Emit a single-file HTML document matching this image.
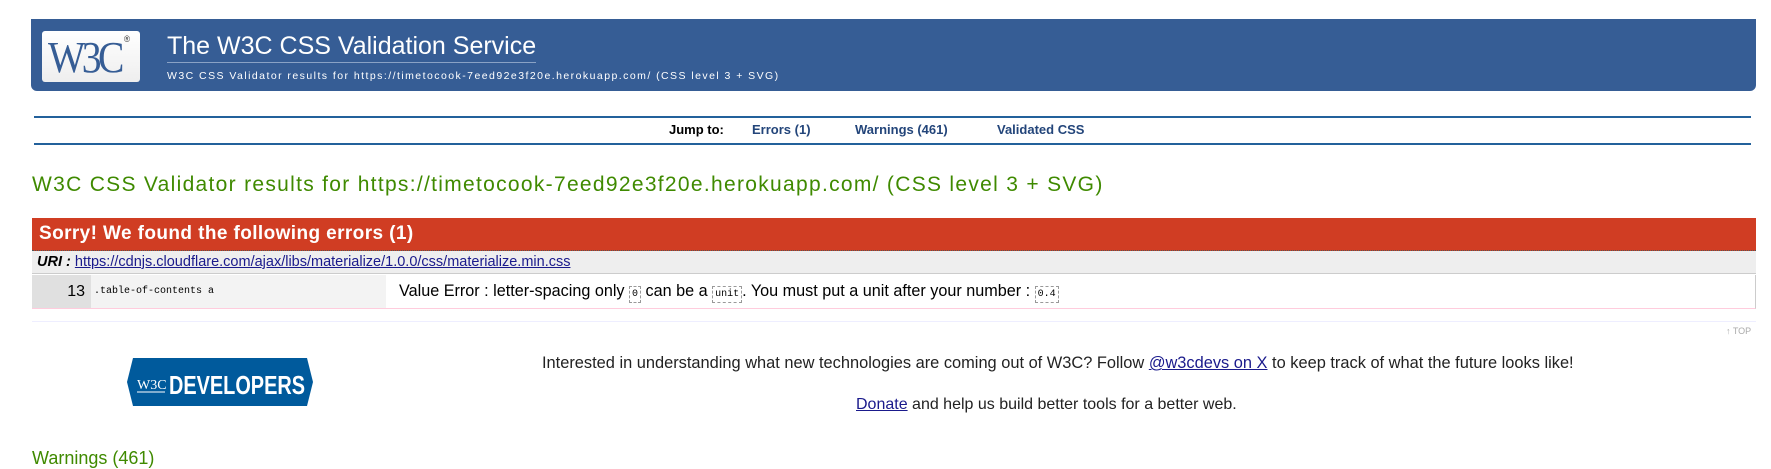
<!DOCTYPE html>
<html><head><meta charset="utf-8"><style>
body{margin:0;width:1771px;height:464px;overflow:hidden;background:#fff;font-family:"Liberation Sans",Arial,sans-serif;position:relative}
.a{position:absolute}
#hd{left:31px;top:19px;width:1725px;height:72px;background:#365d95;border-radius:0 0 6px 6px}
#logo{left:42px;top:31px;width:98px;height:51px;background:linear-gradient(#fff,#eee);border-radius:3px}
#logo span{position:absolute;left:6px;top:1px;font-family:"Liberation Serif",serif;font-size:44px;color:#365d95;letter-spacing:-4px;transform:scaleX(.9);transform-origin:left}
#t1{left:167px;top:33px;font-size:25px;color:#fff;border-bottom:1px solid #8aa2c5;padding-bottom:2px;line-height:27px}
#t2{left:167px;top:70px;font-size:10.5px;color:#fff;letter-spacing:1.45px}
.ln{height:2px;background:#23619b;left:34px;width:1717px}
#nav{top:122px;font-size:13px;font-weight:bold;color:#000}
#nav span{position:absolute;white-space:nowrap}
.lk{color:#23457a}
#h2{left:32px;top:173px;font-size:21px;color:#3f8a00;letter-spacing:1.3px}
#red{left:32px;top:218px;width:1724px;height:32px;background:#d03d23;color:#fff;font-weight:bold;font-size:19px;letter-spacing:.4px;line-height:32px;text-indent:7px;border-bottom:1px dotted #555}
#uri{left:32px;top:251px;width:1724px;height:22px;background:#eee;font-size:14.5px;line-height:22px;border-bottom:1px solid #ccc}
#row{left:32px;top:275px;width:1723px;height:33px;border-right:1px solid #ccc;border-bottom:1px solid #fcd;font-size:15px;line-height:33px}
code{font-family:"Liberation Mono",monospace;font-size:10px;border:1px dashed #999;padding:2px 2px}
.p{font-size:16px;color:#222}
</style></head><body>
<div id="hd" class="a"></div>
<div id="logo" class="a"><span>W3C</span><span style="left:82px;top:3px;font-size:9px;color:#333;font-family:'Liberation Sans'">®</span></div>
<div id="t1" class="a">The W3C CSS Validation Service</div>
<div id="t2" class="a">W3C CSS Validator results for https://timetocook-7eed92e3f20e.herokuapp.com/ (CSS level 3 + SVG)</div>
<div class="a ln" style="top:116px"></div>
<div class="a ln" style="top:143px"></div>
<div id="nav" class="a" style="left:-3px;width:1771px">
<span style="left:672px">Jump to:</span><span class="lk" style="left:755px">Errors (1)</span><span class="lk" style="left:858px">Warnings (461)</span><span class="lk" style="left:1000px">Validated CSS</span></div>
<div id="h2" class="a">W3C CSS Validator results for https://timetocook-7eed92e3f20e.herokuapp.com/ (CSS level 3 + SVG)</div>
<div id="red" class="a">Sorry! We found the following errors (1)</div>
<div id="uri" class="a"><b style="margin-left:5px"><i>URI :</i></b> <a style="color:#1a1a8c" href="#">https://cdnjs.cloudflare.com/ajax/libs/materialize/1.0.0/css/materialize.min.css</a></div>
<div id="row" class="a">
<div class="a" style="left:0;top:0;width:59px;height:33px;background:#e0e0e0;text-align:right;font-size:16px"><span style="margin-right:6px">13</span></div>
<div class="a" style="left:59px;top:0;width:295px;height:33px;background:#f3f3f3;font-family:'Liberation Mono',monospace;font-size:10px;text-indent:3px">.table-of-contents a</div>
<div class="a" style="left:367px;top:0;white-space:nowrap;font-size:16.2px">Value Error : letter-spacing only <code>0</code> can be a <code>unit</code>. You must put a unit after your number : <code>0.4</code></div>
</div>
<div class="a" style="left:32px;top:321px;width:1724px;height:1px;background:#eef"></div>
<div class="a" style="left:1726px;top:326px;font-size:9px;color:#aaa">↑ TOP</div>
<svg class="a" style="left:127px;top:358px" width="186" height="48" viewBox="0 0 186 48"><polygon points="6,0 180,0 186,24 180,48 6,48 0,24" fill="#005a9c"/><text x="10" y="31" font-family="Liberation Serif" font-size="14" fill="#fff">W3C</text><line x1="10" y1="34" x2="38" y2="34" stroke="#fff"/><text x="42" y="36" font-family="Liberation Sans" font-weight="bold" font-size="26" fill="#fff" textLength="136" lengthAdjust="spacingAndGlyphs">DEVELOPERS</text></svg>
<div class="a p" style="left:542px;top:354px;white-space:nowrap;font-size:16.4px">Interested in understanding what new technologies are coming out of W3C? Follow <a href="#" style="color:#1a1a8c">@w3cdevs on X</a> to keep track of what the future looks like!</div>
<div class="a p" style="left:856px;top:396px;white-space:nowrap"><a href="#" style="color:#1a1a8c">Donate</a> and help us build better tools for a better web.</div>
<div class="a" style="left:32px;top:448px;font-size:18px;color:#3f8a00">Warnings (461)</div>
</body></html>
